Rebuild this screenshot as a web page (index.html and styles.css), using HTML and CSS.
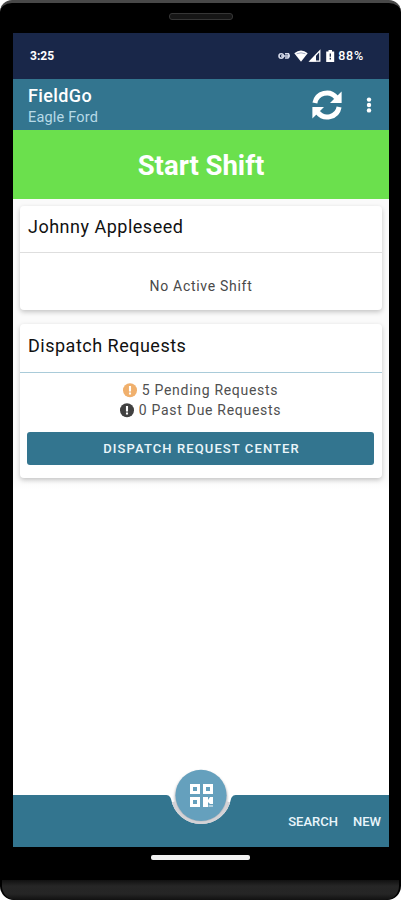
FILE: index.html
```html
<!DOCTYPE html>
<html lang="en">
<head>
<meta charset="utf-8">
<title>FieldGo</title>
<link rel="stylesheet" href="styles.css">
</head>
<body>
<div class="phone">
  <div class="bezel-top"><div class="speaker"></div></div>
  <div class="screen">
    <div class="status">
      <span class="clock">3:25</span>
      <svg class="status-icons" width="58" height="14" viewBox="0 0 58 14">
        <g fill="none" stroke="#d5daea" stroke-width="1.6"><circle cx="3.2" cy="7" r="2.2"/><path d="M3 7h8M7 4.8h3.4q1.8 2.2-.4 4.2H7"/></g>
        <path d="M16.3 4.3Q23-1.2 29.7 4.3L23 12.8Z" fill="#fff"/>
        <path d="M18.6 4.8q4.4-2 8.8 0" fill="none" stroke="#8993b2" stroke-width=".8"/>
        <path d="M41.8 1.8V12.2H32Z" fill="none" stroke="#fff" stroke-width="1.3"/>
        <path d="M38 5.5V12.5H31.5Z" fill="#fff"/>
        <path d="M50.5 1h3.5v1.4h2.2V13h-8V2.4h2.3Z" fill="#fff"/>
        <path d="M52.3 4.5v3.2M52.3 8.8v1.8" stroke="#192749" stroke-width="1.3"/>
      </svg>
      <span class="percent">88%</span>
    </div>
    <header class="toolbar">
      <div class="titles">
        <h1>FieldGo</h1>
        <p>Eagle Ford</p>
      </div>
      <svg class="sync" width="30" height="30" viewBox="0 0 30 30">
        <g fill="none" stroke="#fff" stroke-width="5"><path d="M2.9 13A12.1 12.1 0 0 1 24.3 7.6"/><path d="M27.1 17A12.1 12.1 0 0 1 5.7 22.4"/></g>
        <path d="M29.6 1.6V13H18Z" fill="#fff"/>
        <path d="M.4 28.4V17H12Z" fill="#fff"/>
      </svg>
      <svg class="more" width="6" height="18" viewBox="0 0 6 18" fill="#fff"><circle cx="3" cy="3.6" r="2.2"/><circle cx="3" cy="9" r="2.2"/><circle cx="3" cy="14.4" r="2.2"/></svg>
    </header>
    <div class="start"><span>Start Shift</span></div>
    <main>
      <section class="card shift">
        <h2 class="name">Johnny Appleseed</h2>
        <p class="empty"><span>No Active Shift</span></p>
      </section>
      <section class="card dispatch">
        <h2 class="heading">Dispatch Requests</h2>
        <div class="counts">
          <p class="count pending"><svg width="15" height="15" viewBox="0 0 15 15"><circle cx="7" cy="7.2" r="7" fill="#f0b06d"/><path d="M7 3v5.4M7 9.6v2" stroke="#fff" stroke-width="2.1"/></svg><span>5 Pending Requests</span></p>
          <p class="count due"><svg width="15" height="15" viewBox="0 0 15 15"><circle cx="7" cy="7.2" r="7" fill="#414141"/><path d="M7 3v5.4M7 9.6v2" stroke="#fff" stroke-width="2.1"/></svg><span>0 Past Due Requests</span></p>
        </div>
        <div class="center-button"><span>DISPATCH REQUEST CENTER</span></div>
      </section>
    </main>
    <footer class="bottom-bar">
      <svg class="notch" width="80" height="64" viewBox="0 0 80 64">
        <defs>
          <filter id="soft" x="-20%" y="-20%" width="140%" height="140%"><feGaussianBlur stdDeviation="1"/></filter>
          <clipPath id="cut"><path d="M4 0H76V28C72 28 71 29.5 70 32A30.5 30.5 0 0 1 10 32C9 29.5 8 28 4 28Z"/></clipPath>
        </defs>
        <g clip-path="url(#cut)">
          <rect width="80" height="64" fill="#fff"/>
          <circle cx="40" cy="30.5" r="26.5" fill="#bdbdc1" filter="url(#soft)"/>
          <path d="M12 35A29 29 0 0 0 68 35" fill="none" stroke="#d3d2d6" stroke-width="4"/>
        </g>
        <circle cx="40" cy="28.3" r="25.6" fill="#65a0bd"/>
        <g fill="none" stroke="#fff" stroke-width="3"><path d="M30.5 18.5h7v7h-7ZM43.5 18.5h7v7h-7ZM30.5 31.5h7v7h-7Z"/></g>
        <path d="M42 30h5v3l2-3h3v7h-3l-2-2v5h-5Z" fill="#fff"/><path d="M47.5 38.2H52V39.8h-4.5Z" fill="#c8dee9"/>
      </svg>
      <span class="search">SEARCH</span><span class="new">NEW</span>
    </footer>
  </div>
  <div class="navigation"><div class="pill"></div></div>
  <div class="chin"></div>
</div>
</body>
</html>
```
FILE: styles.css
```css
* { box-sizing: border-box; }
body { margin: 0; background: #fff; font-family: Roboto, sans-serif; }
h1, h2, p { margin: 0; }
span { white-space: nowrap; }
svg { display: block; flex: none; }

.phone { width: 401px; height: 900px; background: #000; border-radius: 12px 12px 14px 14px; border-top: 3px solid #484848; overflow: hidden; display: flex; flex-direction: column; }
.bezel-top { height: 30px; padding-top: 10px; flex: none; }
.speaker { width: 64px; height: 7px; margin: 0 auto; border: 1px solid #363636; border-radius: 3px; background: #161616; }
.screen { width: 376px; height: 814px; margin-left: 13px; background: #fff; display: flex; flex-direction: column; flex: none; }

.status { height: 46px; background: #192749; color: #fff; display: flex; align-items: center; padding: 0 25px 0 17px; font-size: 12px; font-weight: 700; }
.clock { letter-spacing: 0; }
.status-icons { margin-left: auto; margin-right: 2px; }
.percent { font-size: 12.5px; line-height: 14px; font-weight: 500; letter-spacing: .8px; }

.toolbar { height: 51px; background: #33758f; color: #fff; display: flex; align-items: center; padding: 0 17px 0 15px; }
.titles { flex: 1; }
h1 { font-size: 18px; line-height: 22px; font-weight: 500; letter-spacing: .4px; margin-top: 4px; }
.titles p { font-size: 14.5px; line-height: 22px; color: #b7dae7; letter-spacing: .2px; }
.sync { margin-right: 24px; }

.start { height: 69px; background: #6be04d; color: #fff; display: flex; align-items: center; justify-content: center; font-size: 27.5px; font-weight: 700; padding-top: 2px; }

main { flex: 1; padding: 7px 7px 0; background: linear-gradient(#fafafa 0 280px, #fff 290px); }
.card { background: #fff; border-radius: 4px; box-shadow: 0 2px 5px rgba(0,0,0,.22); }
.shift { height: 104px; }
.dispatch { height: 154px; margin-top: 14px; }
h2 { height: 47px; padding: 9px 8px 0; font-size: 18px; line-height: 23px; font-weight: 400; color: #111; letter-spacing: .5px; border-bottom: 1px solid #dedede; }
.heading { height: 49px; padding-top: 10px; border-bottom: 1px solid #a9cbd9; }
.empty { padding-top: 23px; text-align: center; font-size: 14px; line-height: 20px; color: #494949; letter-spacing: .7px; }
.counts { padding-top: 7px; }
.count { height: 20px; display: flex; align-items: center; justify-content: center; gap: 4px; font-size: 14px; line-height: 20px; color: #505050; letter-spacing: .7px; padding-right: 1px; }
.center-button { height: 33px; margin: 12px 8px 0 7px; background: #33758f; border-radius: 3px; color: #eaf5fa; display: flex; align-items: center; justify-content: center; font-size: 13px; font-weight: 500; letter-spacing: 1.1px; padding-left: 2px; }

.bottom-bar { position: relative; height: 52px; background: #33758f; color: #e9f5fb; display: flex; align-items: center; justify-content: flex-end; gap: 15px; padding-right: 8px; font-size: 13px; font-weight: 500; }
.notch { position: absolute; left: 148px; top: -28px; }

.navigation { height: 33px; padding-top: 8px; flex: none; }
.pill { width: 99px; height: 5px; margin: 0 auto; background: #f1f1f1; border-radius: 2px; }
.chin { flex: 1; background: linear-gradient(#111, #262626 6px, #252525 14px, #111); border-radius: 0 0 14px 14px; margin: 0 2px; }
```
